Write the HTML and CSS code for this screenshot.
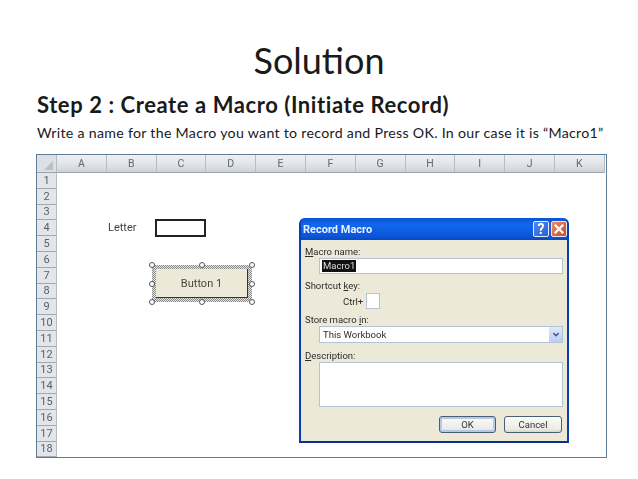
FILE: index.html
```html
<!DOCTYPE html>
<html lang="en">
<head>
<meta charset="utf-8">
<title>Solution</title>
<link rel="stylesheet" href="styles.css">
</head>
<body>
<main class="slide">
  <h1 class="title">Solution</h1>
  <h2 class="step">Step 2 : Create a Macro (Initiate Record)</h2>
  <p class="desc">Write a name for the Macro you want to record and Press OK. In our case it is “Macro1”</p>
  <section class="shot">
    <div class="sheet">
      <div class="corner"><span class="corner-tri"></span></div>
      <div class="colhead">A</div><div class="colhead">B</div><div class="colhead">C</div><div class="colhead">D</div><div class="colhead">E</div><div class="colhead">F</div><div class="colhead">G</div><div class="colhead">H</div><div class="colhead">I</div><div class="colhead">J</div><div class="colhead">K</div><div class="colend"></div>
      <div class="rows">
        <div class="rowhead">1</div><div class="rowhead">2</div><div class="rowhead">3</div><div class="rowhead">4</div><div class="rowhead">5</div><div class="rowhead">6</div><div class="rowhead">7</div><div class="rowhead">8</div><div class="rowhead">9</div><div class="rowhead">10</div><div class="rowhead">11</div><div class="rowhead">12</div><div class="rowhead">13</div><div class="rowhead">14</div><div class="rowhead">15</div><div class="rowhead">16</div><div class="rowhead">17</div><div class="rowhead">18</div>
      </div>
      <div class="canvas">
        <span class="letter">Letter</span>
        <div class="cellbox"></div>
        <div class="sel">
          <div class="xlbtn">Button 1</div>
          <i class="h h-tl"></i><i class="h h-tc"></i><i class="h h-tr"></i><i class="h h-ml"></i><i class="h h-mr"></i><i class="h h-bl"></i><i class="h h-bc"></i><i class="h h-br"></i>
        </div>
      </div>
    </div>
    <div class="dialog">
      <div class="titlebar">
        <span class="dlg-title">Record Macro</span>
        <span class="tb-btn tb-help">?</span>
        <span class="tb-btn tb-close">
          <svg viewBox="0 0 18 18" width="14" height="14"><path d="M3.500 3.500 14.500 14.500M14.500 3.500 3.500 14.500" stroke="#fff" stroke-width="3" fill="none"/></svg>
        </span>
      </div>
      <div class="dlg-body">
        <div class="lbl"><u>M</u>acro name:</div>
        <div class="field name-field"><span class="selected">Macro1</span></div>
        <div class="lbl l-key">Shortcut <u>k</u>ey:</div>
        <div class="ctrl-row"><span class="ctrl">Ctrl+</span><span class="keybox"></span></div>
        <div class="lbl l-store">Store macro <u>i</u>n:</div>
        <div class="field combo"><span>This Workbook</span>
          <span class="combo-btn"><svg viewBox="0 0 10 8" width="8" height="6"><path d="M1.500 1.500 5 5 8.500 1.500" stroke="#3b5a94" stroke-width="2" fill="none"/></svg></span>
        </div>
        <div class="lbl l-desc"><u>D</u>escription:</div>
        <div class="field descbox"></div>
        <div class="actions">
          <button class="btn btn-default">OK</button>
          <button class="btn btn-cancel">Cancel</button>
        </div>
      </div>
    </div>
  </section>
</main>
</body>
</html>
```
FILE: styles.css
```css
* { box-sizing: border-box; }
html, body { margin: 0; background: #fff; }
.slide {
  width: 638px;
  height: 479px;
  padding: 0 32px 0 37px;
  display: flex;
  flex-direction: column;
  font-family: Lato, "Open Sans", sans-serif;
  color: #1a1a1a;
  overflow: hidden;
}
.title {
  margin: 39px 0 0;
  font-size: 36px;
  line-height: 42px;
  font-weight: 400;
  text-align: center;
  padding-right: 5px;
}
.step {
  margin: 11px 0 0;
  font-size: 22px;
  line-height: 26px;
  font-weight: 700;
  letter-spacing: 0.58px;
  white-space: nowrap;
}
.desc {
  margin: 6px 0 0;
  font-size: 14.2px;
  line-height: 18px;
  letter-spacing: 0.28px;
  white-space: nowrap;
}
.shot {
  position: relative;
  margin: 12px 0 0 -1px;
  width: 571px;
  height: 304px;
  border: 1px solid #5f7d96;
  background: #fff;
  filter: blur(0.45px);
  font-family: Roboto, "Open Sans", sans-serif;
}
.sheet {
  display: grid;
  grid-template-columns: 20px repeat(11, 49.8px) 1fr;
  grid-template-rows: 18px 1fr;
  height: 100%;
}
.corner {
  background: #dcdfe3;
  border-right: 1px solid #b5bcc4;
  border-bottom: 1px solid #9aa3ad;
  position: relative;
}
.corner-tri {
  position: absolute;
  right: 3px;
  bottom: 2px;
  border-style: solid;
  border-width: 0 0 9px 9px;
  border-color: transparent transparent #b8bfc6 transparent;
}
.colhead {
  display: flex;
  align-items: center;
  justify-content: center;
  font-size: 10.5px;
  color: #5d6a78;
  background: linear-gradient(#eef0f2, #e3e5e8 50%, #cfd3d7);
  border-right: 1px solid #b5bcc4;
  border-bottom: 1px solid #9aa3ad;
}
.colend { background: #fff; }
.rows {
  display: grid;
  grid-auto-rows: 15.8px;
  background: #e3e5e8;
}
.rowhead {
  display: flex;
  align-items: center;
  justify-content: center;
  font-size: 11px;
  color: #566372;
  background: #e3e5e8;
  border-right: 1px solid #b5bcc4;
  border-bottom: 1px solid #a0a8b0;
}
.canvas {
  grid-column: 2 / -1;
  position: relative;
}
.letter {
  position: absolute;
  left: 51px;
  top: 48px;
  font-size: 11px;
  line-height: 14px;
  color: #444;
}
.cellbox {
  position: absolute;
  left: 98px;
  top: 46px;
  width: 51px;
  height: 18px;
  border: 2px solid #222;
  background: #fff;
}
.sel {
  position: absolute;
  left: 95px;
  top: 92px;
  width: 100px;
  height: 37px;
  padding: 4px;
  background: repeating-conic-gradient(#8a8a8a 0 25%, #e4e4e4 0 50%) 0 0 / 2px 2px;
}
.xlbtn {
  height: 100%;
  display: flex;
  align-items: center;
  justify-content: center;
  background: #ece9d8;
  font-size: 11px;
  color: #46463c;
  border-right: 1px solid #333;
  border-bottom: 1px solid #333;
}
.h {
  position: absolute;
  width: 6px;
  height: 6px;
  border-radius: 50%;
  background: #fff;
  border: 1px solid #555;
}
.h-tl { left: -3px; top: -3px; }
.h-tc { left: calc(50% - 3px); top: -3px; }
.h-tr { right: -3px; top: -3px; }
.h-ml { left: -3px; top: calc(50% - 3px); }
.h-mr { right: -3px; top: calc(50% - 3px); }
.h-bl { left: -3px; bottom: -3px; }
.h-bc { left: calc(50% - 3px); bottom: -3px; }
.h-br { right: -3px; bottom: -3px; }
.dialog {
  position: absolute;
  left: 262px;
  top: 63px;
  width: 270px;
  height: 225px;
  display: flex;
  flex-direction: column;
  border-radius: 6px 6px 0 0;
  background: #0f50cf;
  border: 2px solid #0b3fb0;
  border-top: 0;
  border-bottom: 2px solid #0c2f8e;
}
.titlebar {
  height: 22px;
  display: flex;
  align-items: center;
  gap: 2px;
  padding: 0 0 0 2px;
  border-radius: 6px 6px 0 0;
  background: linear-gradient(#0a52d8, #1167ea 30%, #0b56dc 80%, #0a48c4);
}
.dlg-title {
  flex: 1;
  color: #e9f0ff;
  font-size: 11px;
  font-weight: 700;
}
.tb-btn {
  width: 16px;
  height: 16px;
  display: flex;
  align-items: center;
  justify-content: center;
  border: 1px solid #e4ebf7;
  border-radius: 2px;
  color: #fff;
}
.tb-help {
  background: linear-gradient(135deg, #4f86ec, #2c5fd0);
  font-size: 14px;
  font-weight: 700;
}
.tb-close {
  background: linear-gradient(135deg, #ea8a6a, #cf4b25);
}
.dlg-body {
  flex: 1;
  background: #ece9d8;
  padding: 5px 4px 0;
  display: flex;
  flex-direction: column;
  font-size: 9.5px;
  color: #2c2c2c;
}
.lbl { line-height: 13px; }
.field {
  margin-left: 14px;
  background: #fff;
  border: 1px solid #b5c4d1;
}
.name-field {
  height: 16px;
  padding: 1px 2px;
  line-height: 12px;
  display: flex;
}
.selected { background: #111; color: #ddd; padding: 0 1px; }
.l-key { margin-top: 5px; }
.ctrl-row {
  display: flex;
  align-items: center;
  gap: 3px;
  margin-top: 1px;
  padding-left: 38px;
}
.keybox {
  width: 14px;
  height: 16px;
  background: #fff;
  border: 1px solid #b5c4d1;
}
.l-store { margin-top: 4px; }
.combo {
  height: 17px;
  display: flex;
  align-items: center;
  justify-content: space-between;
  padding-left: 3px;
}
.combo-btn {
  width: 13px;
  height: 100%;
  display: flex;
  align-items: center;
  justify-content: center;
  background: linear-gradient(#dfe8fb, #b9cdf3);
}
.l-desc { margin-top: 6px; }
.descbox { height: 45px; }
.actions {
  display: flex;
  justify-content: flex-end;
  gap: 8px;
  margin-top: 9px;
  padding-right: 1px;
}
.btn {
  width: 57px;
  height: 17px;
  padding: 0;
  font: inherit;
  color: #333;
  background: linear-gradient(#fbfbf8, #ecebe4 80%, #d8d6cb);
  border: 1px solid #4a5e72;
  border-radius: 3px;
}
.btn-cancel { width: 58px; }
.btn-default { box-shadow: inset 0 0 0 2px #b4c8e8; }
```
